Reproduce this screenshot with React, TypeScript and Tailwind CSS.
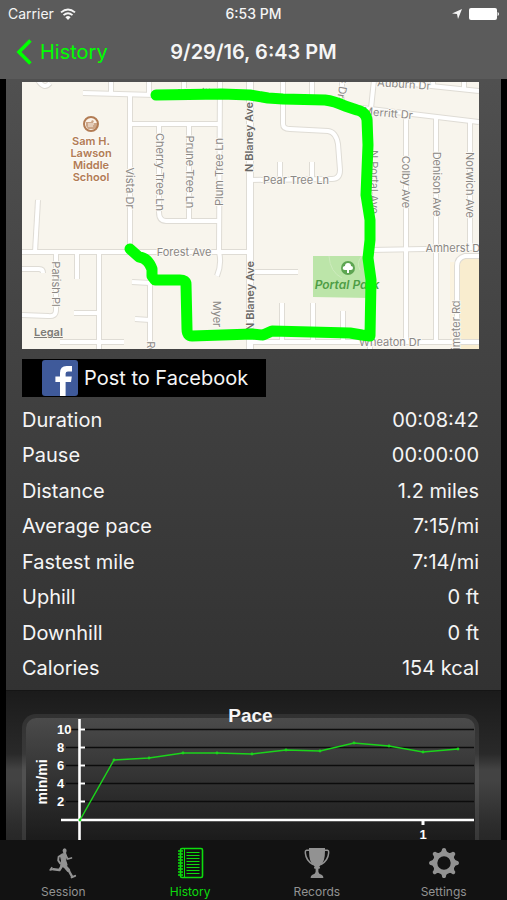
import React, { useState } from 'react'
import clsx from 'clsx'

type Stat = {
  label: string
  value: string
}

type Label = {
  text: string
  x: number
  y: number
  rotate?: number
  major?: boolean
}

const stats: Stat[] = [
  { label: 'Duration', value: '00:08:42' },
  { label: 'Pause', value: '00:00:00' },
  { label: 'Distance', value: '1.2 miles' },
  { label: 'Average pace', value: '7:15/mi' },
  { label: 'Fastest mile', value: '7:14/mi' },
  { label: 'Uphill', value: '0 ft' },
  { label: 'Downhill', value: '0 ft' },
  { label: 'Calories', value: '154 kcal' },
]

const roads = [
  'M38 80q6 10 12 3',
  'M83 93L155 95',
  'M111 80V93',
  'M149 80V94',
  'M184 80V94',
  'M130 94V252',
  'M130 124H220',
  'M159 124V212Q159 221 166 221H219',
  'M189 124V221',
  'M220 80L219 252Q222 264 217 276',
  'M22 252H250',
  'M38 200L35 252',
  'M56 252V310Q56 317 48 316L22 315',
  'M22 269H39Q43 269 43 273',
  'M77 252V279',
  'M99 252V349',
  'M74 313H99',
  'M60 342H124',
  'M132 282L150 283V349',
  'M135 319L150 320',
  'M283 80V124Q283 129 290 129L328 131Q336 132 338 144L340 170Q340 179 332 179L250 180',
  'M280 162V180',
  'M312 162V180',
  'M312 80V98',
  'M342 80V104',
  'M374 80L370 118V349',
  'M374 80L479 91',
  'M433 80V86',
  'M464 80V89',
  'M362 108L479 122',
  'M406 114V342',
  'M436 118V342',
  'M470 121V248',
  'M370 250L479 248',
  'M250 272H298',
  'M250 342H479',
  'M282 303V342',
  'M313 303V342',
  'M343 311V342',
  'M479 256H465Q457 258 457 266V349',
]

const labels: Label[] = [
  { text: 'Merritt Dr', x: 202, y: 93 },
  { text: 'Auburn Dr', x: 404, y: 84, rotate: 4 },
  { text: 'Merritt Dr', x: 388, y: 113, rotate: 5 },
  { text: 's Dr', x: 343, y: 88, rotate: 100 },
  { text: 'Vista Dr', x: 130, y: 188, rotate: 90 },
  { text: 'Cherry Tree Ln', x: 160, y: 172, rotate: 90 },
  { text: 'Prune Tree Ln', x: 190, y: 172, rotate: 90 },
  { text: 'Plum Tree Ln', x: 219, y: 172, rotate: -90 },
  { text: 'N Blaney Ave', x: 249, y: 137, rotate: -90, major: true },
  { text: 'N Blaney Ave', x: 250, y: 296, rotate: -90, major: true },
  { text: 'Pear Tree Ln', x: 296, y: 180 },
  { text: 'N Portal Ave', x: 374, y: 182, rotate: 90 },
  { text: 'Colby Ave', x: 406, y: 182, rotate: 90 },
  { text: 'Denison Ave', x: 437, y: 184, rotate: 90 },
  { text: 'Norwich Ave', x: 470, y: 185, rotate: 90 },
  { text: 'Amherst Dr', x: 455, y: 248 },
  { text: 'Forest Ave', x: 184, y: 252 },
  { text: 'Parish Pl', x: 56, y: 284, rotate: 90 },
  { text: 'Myer', x: 217, y: 314, rotate: 90 },
  { text: 'Wheaton Dr', x: 390, y: 342 },
  { text: 'Perimeter Rd', x: 456, y: 334, rotate: -90 },
  { text: 'Rd', x: 151, y: 348, rotate: 90 },
]

const route =
  'M156 95L222 94L250 95L268 98L283 99L325 100Q334 101 345 106L357 110Q366 112 367 120L368 145L366 195L370 220V240L368 258L371 280L370 336L362 335L350 333L272 331L263 335L252 334L222 335L192 336Q187 336 187 329L186 284Q186 280 180 280L155 280L152 276V269Q148 258 139 257L130 249'

const pace: [number, number][] = [
  [80, 820],
  [114, 760],
  [149, 758],
  [183, 753],
  [217, 753],
  [252, 754],
  [286, 750],
  [320, 751],
  [354, 743],
  [389, 746],
  [423, 752],
  [458, 749],
]

const paceTicks = [
  { value: 10, y: 729 },
  { value: 8, y: 747 },
  { value: 6, y: 765 },
  { value: 4, y: 783 },
  { value: 2, y: 801 },
]

const RunMap = () => (
  <div className="relative">
    <svg
      viewBox="22 82 457 267"
      className="block w-full bg-[#f8f5ed]"
      role="img"
      aria-label="Route of the run"
      fontFamily="Inter, sans-serif"
    >
      <path d="M458 257H479V349H458Z" fill="#f9edcf" />
      <path d="M450 262H458V349H450Z" fill="#fbf3e0" />
      <path d="M313 256H370V298L313 297Z" fill="#bce5a9" />
      <path d="M329 256Q330 272 342 278M362 256Q356 262 360 270" fill="none" stroke="#cdebbd" />
      <g fill="none" stroke="#dfdcd5" strokeWidth="6">
        {roads.map((d, i) => (
          <path key={i} d={d} />
        ))}
        <path d="M250 80V350" strokeWidth="8" />
      </g>
      <g fill="none" stroke="#ffffff" strokeWidth="4">
        {roads.map((d, i) => (
          <path key={i} d={d} />
        ))}
        <path d="M250 80V350" strokeWidth="6" />
      </g>

      <g
        fontSize="11"
        textAnchor="middle"
        stroke="#fbf9f4"
        strokeWidth="2"
        paintOrder="stroke"
        strokeLinejoin="round"
      >
        {labels.map((l, i) => (
          <text
            key={i}
            x={l.x}
            y={l.y + 4}
            fill={l.major ? '#6a6866' : '#8b8885'}
            fontWeight={l.major ? 600 : 400}
            transform={l.rotate ? `rotate(${l.rotate} ${l.x} ${l.y})` : undefined}
          >
            {l.text}
          </text>
        ))}
        <g fill="#b27c54" fontWeight="600">
          <text x="91" y="145">Sam H.</text>
          <text x="91" y="157">Lawson</text>
          <text x="91" y="169">Middle</text>
          <text x="91" y="181">School</text>
        </g>
      </g>

      <circle cx="91" cy="124" r="7" fill="#fbf3ea" stroke="#b27c54" strokeWidth="2" />
      <path d="M86 122h5l1-2 2 1-1 2h4v4l-3 2h-6l-2-3Z" fill="#b27c54" opacity="0.65" />
      <path d="M88 124h6M88 126h5" stroke="#fbf3ea" />

      <circle cx="348" cy="268" r="7" fill="#5da552" />
      <path
        d="M347 273V270H345Q342 270 343 267Q344 266 345 266Q345 263 348 263T351 266Q353 266 353 268T351 270H349V273Z"
        fill="#ffffff"
      />
      <text
        x="347"
        y="289"
        textAnchor="middle"
        fontSize="12"
        fontWeight="600"
        fontStyle="italic"
        fill="#4f9d45"
      >
        Portal Park
      </text>

      <path
        d={route}
        fill="none"
        stroke="#00ff00"
        strokeWidth="11"
        strokeLinecap="round"
        strokeLinejoin="round"
      />
    </svg>
    <a
      href="#legal"
      className="absolute bottom-2 left-3 text-[11px] leading-[18px] font-semibold text-[#7d7b77] underline"
    >
      Legal
    </a>
  </div>
)

const PaceChart = () => (
  <section className="border-t border-[#151515] bg-[linear-gradient(to_bottom,#1b1b1b_0%,#292929_35%,#434343_44%,#434343_50%,#2c2c2c_75%,#1f1f1f_100%)] pt-[23px] pr-[22px] pb-4 pl-4">
    <div className="relative rounded-[14px] border-4 border-[#ffffff14] bg-linear-to-b from-[#4b4b4b] to-[#181818] bg-clip-padding">
      <h2 className="absolute inset-x-0 -top-3 text-center font-['Liberation_Sans',sans-serif] text-[19px] leading-5 font-bold">
        Pace
      </h2>
      <svg
        viewBox="26 718 449 132"
        className="block w-full"
        role="img"
        aria-label="Pace in minutes per mile"
        fontFamily="'Liberation Sans', sans-serif"
        fontWeight="bold"
        fill="#ffffff"
      >
        {paceTicks.map((t) => (
          <g key={t.value}>
            <path d={`M66 ${t.y + 0.5}H474`} stroke="#0c0c0c" strokeWidth="1.4" />
            <path d={`M80 ${t.y + 0.5}H85`} stroke="#ffffff" strokeWidth="2" />
            <text x="57" y={t.y + 5} fontSize="13">
              {t.value}
            </text>
          </g>
        ))}
        <path d="M61 820H474" stroke="#ffffff" strokeWidth="2.6" />
        <path d="M79.5 719V850" stroke="#ffffff" strokeWidth="2.6" />
        <path d="M423 820V825" stroke="#ffffff" strokeWidth="3" />
        <text x="423" y="839" fontSize="13" textAnchor="middle">
          1
        </text>
        <text x="42" y="782" fontSize="14" textAnchor="middle" transform="rotate(-90 42 782)" dy="5">
          min/mi
        </text>
        <polyline
          points={pace.map((p) => p.join(',')).join(' ')}
          fill="none"
          stroke="#1bd41b"
          strokeWidth="1.5"
        />
        {pace.map(([x, y]) => (
          <circle key={x} cx={x} cy={y} r="1.4" fill="#1bd41b" />
        ))}
      </svg>
    </div>
  </section>
)

const RunnerIcon = () => (
  <svg viewBox="0 0 32 32" className="size-8" fill="none" stroke="currentColor" strokeLinecap="round" strokeLinejoin="round">
    <ellipse cx="17.6" cy="3.8" rx="2" ry="2.6" fill="currentColor" stroke="none" />
    <path
      d="M15 7L18.6 6.4L19.4 9L18.6 13.5L20 18L16.4 20L13.8 18.8L14.6 13.6L13.6 9Z"
      fill="currentColor"
      strokeWidth="1.2"
    />
    <path d="M14.4 8L11.6 9.8L11.2 13.4L13.2 16.4" strokeWidth="1.9" />
    <path d="M18.8 8.4L20.8 12L24.4 11" strokeWidth="1.8" />
    <path d="M15 18.8L12.4 23L6.4 22.2" strokeWidth="2.6" />
    <path d="M6.4 22.2L3.2 23L4.8 20.6" strokeWidth="1.6" />
    <path d="M17.4 18.6L21.4 23.2" strokeWidth="3.6" />
    <path d="M21.6 23.4L25 29.4" strokeWidth="2.3" />
    <path d="M24.6 30.4L28.2 28.8" strokeWidth="1.9" />
  </svg>
)

const NotebookIcon = () => (
  <svg viewBox="0 0 32 32" className="size-8" fill="none" stroke="currentColor">
    <rect x="6.5" y="1.5" width="22" height="29" rx="1.5" strokeWidth="1.6" />
    <path d="M10.5 2V30" strokeWidth="1" />
    <path
      d="M4 4H9M4 7H9M4 10H9M4 13H9M4 16H9M4 19H9M4 22H9M4 25H9M4 28H9"
      strokeWidth="1.5"
    />
    <path
      d="M12.5 5.5H25.5M12.5 8.5H25.5M12.5 11.5H25.5M12.5 14.5H25.5M12.5 17.5H25.5M12.5 20.5H25.5M12.5 23.5H25.5M12.5 26.5H25.5"
      strokeWidth="1"
    />
  </svg>
)

const TrophyIcon = () => (
  <svg viewBox="0 0 32 32" className="size-8" fill="currentColor">
    <path d="M8 1H24V4Q24 14 20 18Q17.4 19.6 17.4 21.6V25Q17.6 27 21 28Q22.4 28.8 22.4 31H9.6Q9.6 28.8 11 28Q14.4 27 14.6 25V21.6Q14.6 19.6 12 18Q8 14 8 4Z" />
    <path
      d="M8.4 3.2H5.6Q4 3.4 4.4 6.4Q5 13.6 12 17.6M23.6 3.2H26.4Q28 3.4 27.6 6.4Q27 13.6 20 17.6"
      fill="none"
      stroke="currentColor"
      strokeWidth="1.5"
    />
    <rect x="13" y="19.6" width="6" height="2.2" rx="1" />
  </svg>
)

const GearIcon = () => (
  <svg viewBox="0 0 32 32" className="size-8" fill="currentColor">
    <circle cx="16" cy="16" r="9" fill="none" stroke="currentColor" strokeWidth="4.6" />
    {[0, 45, 90, 135, 180, 225, 270, 315].map((a) => (
      <path key={a} d="M11.6 6.4Q14 4.4 14.2 1.8Q16 0 17.8 1.8Q18 4.4 20.4 6.4Z" transform={`rotate(${a} 16 16)`} />
    ))}
  </svg>
)

const tabs = [
  { name: 'Session', Icon: RunnerIcon },
  { name: 'History', Icon: NotebookIcon },
  { name: 'Records', Icon: TrophyIcon },
  { name: 'Settings', Icon: GearIcon },
]

const App = () => {
  const [active, setActive] = useState('History')

  return (
    <div className="flex h-screen flex-col bg-black font-[Inter,sans-serif] text-[#f5f5f5]">
      <header className="shrink-0 bg-[#5b5b5b] pb-[7px]">
        <div className="grid h-7 grid-cols-3 items-center px-2 text-sm">
          <div className="flex items-center gap-1.5">
            <span>Carrier</span>
            <svg viewBox="0 0 16 12" className="h-3 w-4" fill="none" stroke="currentColor" strokeWidth="1.9">
              <path d="M1 4.4Q8 -1.6 15 4.4M3.5 7.1Q8 3.2 12.5 7.1" />
              <path d="M5.4 9.2Q8 7 10.6 9.2L8 12Z" fill="currentColor" stroke="none" />
            </svg>
          </div>
          <span className="text-center font-medium">6:53 PM</span>
          <div className="flex items-center justify-end gap-1.5">
            <svg viewBox="0 0 12 12" className="size-3" fill="currentColor">
              <path d="M11 1L7 11L6 6L1 5.6Z" />
            </svg>
            <svg viewBox="0 0 30 12" className="h-3 w-[30px]" fill="#ffffff">
              <rect x="0" y="0" width="28" height="12" rx="2" />
              <path d="M28.6 4Q30 4.4 30 6T28.6 8Z" />
            </svg>
          </div>
        </div>
        <div className="grid h-11 grid-cols-[1fr_auto_1fr] items-center px-4 pt-1">
          <button type="button" className="flex items-center gap-2 justify-self-start text-xl text-[#00ff00]">
            <svg viewBox="0 0 16 26" className="h-[26px] w-4" fill="none" stroke="currentColor" strokeWidth="3.6">
              <path d="M14.4 1.6L3 13L14.4 24.4" />
            </svg>
            History
          </button>
          <h1 className="text-xl font-semibold">9/29/16, 6:43 PM</h1>
        </div>
      </header>

      <main className="mx-1.5 min-h-0 flex-1 overflow-y-auto [scrollbar-width:none]">
        <section className="bg-linear-to-b from-[#505050] to-[#323232] pt-[3px] pr-[22px] pb-1 pl-4">
          <RunMap />
          <button
            type="button"
            className="mt-2.5 flex h-[38px] w-[244px] items-center gap-1.5 bg-black pl-5 text-xl"
          >
            <svg viewBox="0 0 36 36" className="size-9">
              <rect width="36" height="36" rx="3" fill="#3f5a9a" />
              <path
                d="M18 36V22H13.4V16.6H18V13Q18 6 24.6 6H30V11.4H26Q23.6 11.4 23.6 13.6V16.6H29.8L29 22H23.6V36Z"
                fill="#ffffff"
              />
            </svg>
            Post to Facebook
          </button>
          <dl className="mt-[5px] grid h-[284px] grid-rows-8 text-xl">
            {stats.map((s) => (
              <div key={s.label} className="flex items-center justify-between">
                <dt>{s.label}</dt>
                <dd>{s.value}</dd>
              </div>
            ))}
          </dl>
        </section>
        <PaceChart />
      </main>

      <nav className="grid h-[60px] shrink-0 grid-cols-4 bg-[#121212]">
        {tabs.map(({ name, Icon }) => (
          <button
            key={name}
            type="button"
            onClick={() => setActive(name)}
            className={clsx(
              'flex flex-col items-center gap-[5px] pt-[7px] text-xs',
              active === name ? 'text-[#0ddc0d]' : 'text-[#929292]'
            )}
          >
            <Icon />
            {name}
          </button>
        ))}
      </nav>
    </div>
  )
}

export default App
